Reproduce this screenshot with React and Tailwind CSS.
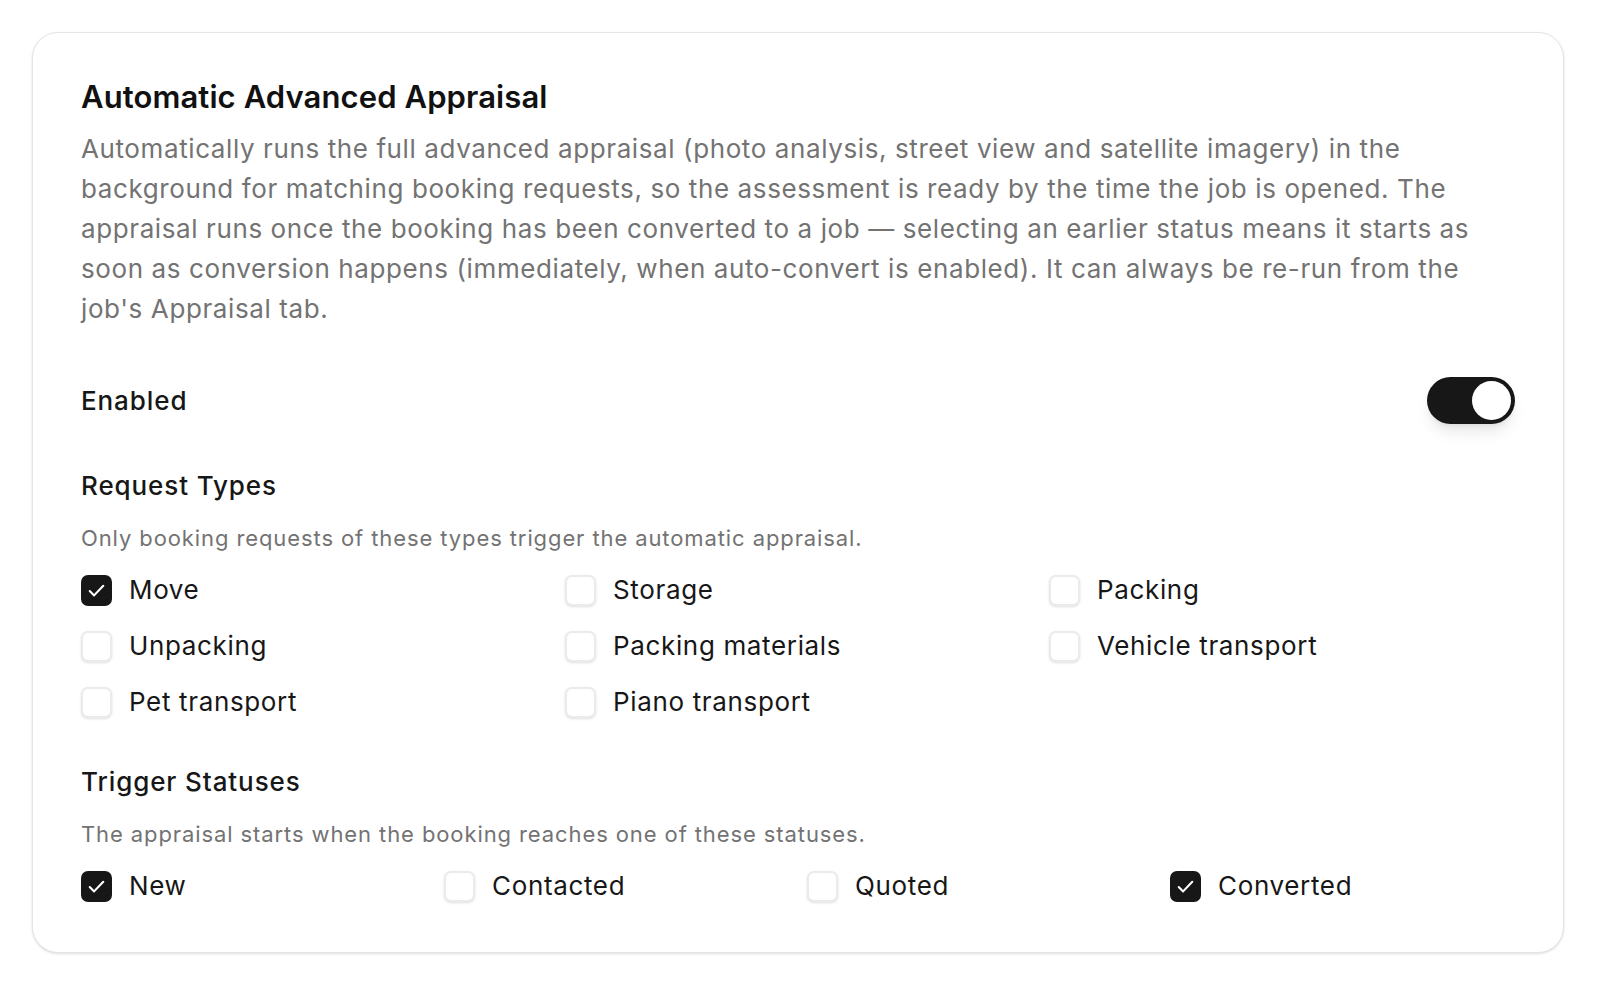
import React, { useState } from "react";

const requestTypes = [
  "Move",
  "Storage",
  "Packing",
  "Unpacking",
  "Packing materials",
  "Vehicle transport",
  "Pet transport",
  "Piano transport",
];

const statuses = ["New", "Contacted", "Quoted", "Converted"];

function CheckIcon() {
  return (
    <svg viewBox="0 0 24 24" className="h-[25px] w-[25px]" fill="none" stroke="white" strokeWidth="2" strokeLinecap="round" strokeLinejoin="round">
      <path d="M5.5 12.5l4.2 4.2L18.5 7.5" />
    </svg>
  );
}

function Checkbox({ label, checked, onToggle }) {
  return (
    <label className="flex h-9 cursor-pointer items-center gap-[17px]" onClick={onToggle}>
      <span
        className={
          checked
            ? "flex h-[31px] w-[31px] shrink-0 items-center justify-center rounded-[7px] bg-[#171717]"
            : "flex h-[31px] w-[31px] shrink-0 items-center justify-center rounded-[7px] border-2 border-[#ebebeb] bg-white shadow-sm"
        }
      >
        {checked && <CheckIcon />}
      </span>
      <span className="text-[26px] leading-9 tracking-[0.65px] text-[#171717]">{label}</span>
    </label>
  );
}

function Toggle({ on, onToggle }) {
  return (
    <button
      onClick={onToggle}
      className={
        on
          ? "flex h-[47px] w-[88px] items-center justify-end rounded-full bg-[#171717] p-[4px] shadow-lg"
          : "flex h-[47px] w-[88px] items-center justify-start rounded-full bg-[#e5e5e5] p-[4px] shadow-lg"
      }
    >
      <span className="h-[39px] w-[39px] rounded-full bg-white" />
    </button>
  );
}

export default function App() {
  const [enabled, setEnabled] = useState(true);
  const [types, setTypes] = useState({ Move: true });
  const [picked, setPicked] = useState({ New: true, Converted: true });

  return (
    <div className="min-h-screen bg-white p-8 font-['Inter',sans-serif]">
      <div className="max-w-[1532px] rounded-[26px] border border-[#e5e5e5] bg-white px-12 pb-12 pt-[46px] shadow-sm">
        <h2 className="text-[31px] font-semibold leading-9 tracking-[0.1px] text-[#111111]">
          Automatic Advanced Appraisal
        </h2>
        <p className="mt-[14px] text-[26px] leading-[40px] tracking-[0.6px] text-[#737373]">
          Automatically runs the full advanced appraisal (photo analysis, street view and satellite imagery) in the
          background for matching booking requests, so the assessment is ready by the time the job is opened. The
          appraisal runs once the booking has been converted to a job — selecting an earlier status means it starts as
          soon as conversion happens (immediately, when auto-convert is enabled). It can always be re-run from the
          job's Appraisal tab.
        </p>

        <div className="mt-12 flex items-center justify-between">
          <span className="text-[26px] font-medium tracking-[0.9px] text-[#171717]">Enabled</span>
          <Toggle on={enabled} onToggle={() => setEnabled((v) => !v)} />
        </div>

        <h3 className="mt-11 text-[26px] font-medium leading-9 tracking-[0.9px] text-[#171717]">Request Types</h3>
        <p className="mt-[18px] text-[22px] leading-8 tracking-[0.9px] text-[#737373]">
          Only booking requests of these types trigger the automatic appraisal.
        </p>
        <div className="mt-[18px] grid grid-cols-3 gap-x-[18px] gap-y-5">
          {requestTypes.map((t) => (
            <Checkbox
              key={t}
              label={t}
              checked={!!types[t]}
              onToggle={() => setTypes((s) => ({ ...s, [t]: !s[t] }))}
            />
          ))}
        </div>

        <h3 className="mt-11 text-[26px] font-medium leading-9 tracking-[0.9px] text-[#171717]">Trigger Statuses</h3>
        <p className="mt-[18px] text-[22px] leading-8 tracking-[0.9px] text-[#737373]">
          The appraisal starts when the booking reaches one of these statuses.
        </p>
        <div className="mt-[18px] grid grid-cols-4 gap-x-[18px]">
          {statuses.map((s) => (
            <Checkbox
              key={s}
              label={s}
              checked={!!picked[s]}
              onToggle={() => setPicked((p) => ({ ...p, [s]: !p[s] }))}
            />
          ))}
        </div>
      </div>
    </div>
  );
}
